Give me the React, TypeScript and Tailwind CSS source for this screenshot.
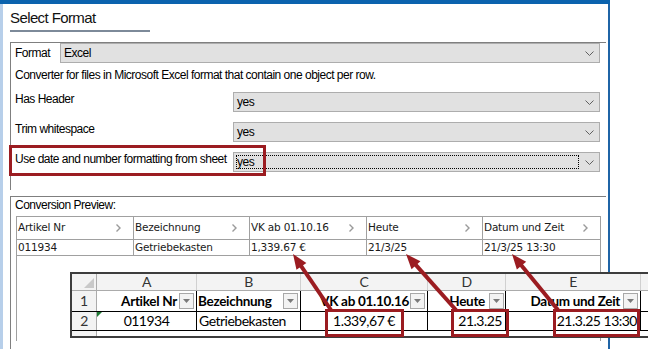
import React from 'react';

const RED = '#9b1c21';

function ChevronDown() {
  return (
    <svg width="9" height="5" viewBox="0 0 9 5">
      <path d="M0.5 0.5 L4.5 4.5 L8.5 0.5" fill="none" stroke="#606060" strokeWidth="1" />
    </svg>
  );
}

function ChevronRight() {
  return (
    <svg width="5" height="8" viewBox="0 0 5 8" className="shrink-0">
      <path d="M0.5 0.5 L4 4 L0.5 7.5" fill="none" stroke="#9a9a9a" strokeWidth="1.4" />
    </svg>
  );
}

function Combo({ value, focused }: { value: string; focused?: boolean }) {
  return (
    <div className="flex-1 h-[20px] bg-[#e1e1e1] border border-[#adadad] flex items-center pl-[2px]">
      <div
        className={`flex-1 h-[14px] flex items-center pl-[0px] leading-[14px] ${
          focused ? 'border border-dotted border-black' : 'border border-transparent'
        }`}
      >
        {value}
      </div>
      <div className="w-[20px] flex justify-center">
        <ChevronDown />
      </div>
    </div>
  );
}

function OptionRow({ label, value, focused }: { label: string; value: string; focused?: boolean }) {
  return (
    <div className="flex shrink-0 h-[20px] mt-[10px] mr-[6px]">
      <div className="w-[222px] pl-[4px] leading-[14px] whitespace-nowrap">{label}</div>
      <Combo value={value} focused={focused} />
    </div>
  );
}

const previewCols = [
  { name: 'Artikel Nr', value: '011934', w: 'w-[117px]' },
  { name: 'Bezeichnung', value: 'Getriebekasten', w: 'w-[116px]' },
  { name: 'VK ab 01.10.16', value: '1,339.67 €', w: 'w-[117px]' },
  { name: 'Heute', value: '21/3/25', w: 'w-[116px]' },
  { name: 'Datum und Zeit', value: '21/3/25 13:30', w: 'flex-1' },
];

function PreviewGrid() {
  return (
    <div className="ml-[5px] w-[585px] h-[125px] shrink-0 border border-b-0 border-[#a0a0a0] font-['DejaVu_Sans',sans-serif] text-[10.5px] tracking-[-0.2px] text-[#1a1a1a]">
      <div className="flex h-[23px] border-b border-[#a0a0a0]">
        {previewCols.map((c, i) => (
          <div
            key={c.name}
            className={`${c.w} shrink-0 flex items-center justify-between pl-[1px] pr-[12px] ${
              i < 4 ? 'border-r border-[#a0a0a0]' : ''
            }`}
          >
            <span>{c.name}</span>
            <ChevronRight />
          </div>
        ))}
      </div>
      <div className="flex h-[16px] border-b border-[#a0a0a0]">
        {previewCols.map((c, i) => (
          <div
            key={c.name}
            className={`${c.w} shrink-0 flex items-center pl-[1px] ${i < 4 ? 'border-r border-[#a0a0a0]' : ''}`}
          >
            {c.value}
          </div>
        ))}
      </div>
    </div>
  );
}

function FilterButton() {
  return (
    <div className="w-[15px] h-[16px] border border-[#a8a8a8] bg-[#f3f3f3] flex items-center justify-center shrink-0">
      <svg width="7" height="4" viewBox="0 0 7 4">
        <path d="M0 0 L7 0 L3.5 4 Z" fill="#7a7a7a" />
      </svg>
    </div>
  );
}

const xlCols = [
  { letter: 'A', w: 'w-[100px]' },
  { letter: 'B', w: 'w-[104px]' },
  { letter: 'C', w: 'w-[127px]' },
  { letter: 'D', w: 'w-[78px]' },
  { letter: 'E', w: 'w-[135px]' },
  { letter: '', w: 'w-[60px]' },
];

function ExcelSnippet() {
  return (
    <div className="absolute left-[70px] top-[272px] w-[640px] h-[66px] border-2 border-r-0 border-[#3d3d3d] bg-white font-['Lato',sans-serif] text-[14px] text-black flex flex-col">
      {/* column letters */}
      <div className="flex h-[17px] bg-[#f3f3f3] border-b border-[#ababab] text-[#333] leading-[16px]">
        <div className="w-[25px] shrink-0 border-r border-[#ababab] relative">
          <svg width="10" height="10" viewBox="0 0 10 10" className="absolute right-[2px] bottom-[2px]">
            <path d="M10 0 L10 10 L0 10 Z" fill="#c9c9c9" />
          </svg>
        </div>
        {xlCols.map((c, i) => (
          <div key={i} className={`${c.w} shrink-0 text-center border-r border-[#d0d0d0]`}>
            {c.letter}
          </div>
        ))}
      </div>
      {/* row 1 */}
      <div className="flex h-[21px] border-b border-black font-bold text-[13.5px] tracking-[-0.3px]">
        <div className="w-[25px] shrink-0 bg-[#f3f3f3] border-r border-[#ababab] text-center text-[#333] leading-[20px] font-normal text-[14px] tracking-normal">1</div>
        <div className="w-[100px] shrink-0 border-r border-black flex items-center justify-end gap-[2px] pr-[2px]">
          <span>Artikel Nr</span>
          <FilterButton />
        </div>
        <div className="w-[104px] shrink-0 border-r border-black flex items-center justify-between pl-[1px] pr-[2px]">
          <span>Bezeichnung</span>
          <FilterButton />
        </div>
        <div className="w-[127px] shrink-0 border-r border-black flex items-center justify-end gap-[1px] pr-[2px]">
          <span>VK ab 01.10.16</span>
          <FilterButton />
        </div>
        <div className="w-[78px] shrink-0 border-r border-black flex items-center justify-end gap-[4px] pr-[1px]">
          <span>Heute</span>
          <FilterButton />
        </div>
        <div className="w-[135px] shrink-0 border-r border-black flex items-center justify-end gap-[3px] pr-[2px]">
          <span>Datum und Zeit</span>
          <FilterButton />
        </div>
        <div className="w-[60px] shrink-0" />
      </div>
      {/* row 2 */}
      <div className="flex h-[19px] border-b border-black leading-[18px]">
        <div className="w-[25px] shrink-0 bg-[#f3f3f3] border-r border-[#ababab] text-center text-[#333]">2</div>
        <div className="w-[100px] shrink-0 border-r border-black text-center relative">
          <svg width="5" height="5" viewBox="0 0 5 5" className="absolute left-0 top-0">
            <path d="M0 0 L5 0 L0 5 Z" fill="#1e7b34" />
          </svg>
          011934
        </div>
        <div className="w-[104px] shrink-0 border-r border-black pl-[2px]">Getriebekasten</div>
        <div className="w-[127px] shrink-0 border-r border-black text-center">1.339,67 €</div>
        <div className="w-[78px] shrink-0 border-r border-black text-right pr-[3px]">21.3.25</div>
        <div className="w-[135px] shrink-0 border-r border-black text-right pr-[3px]">21.3.25 13:30</div>
        <div className="w-[60px] shrink-0" />
      </div>
      {/* row 3 (cut off) */}
      <div className="flex flex-1">
        <div className="w-[25px] shrink-0 bg-[#f3f3f3] border-r border-[#ababab]" />
      </div>
    </div>
  );
}

function Arrow({ x1, y1, x2, y2 }: { x1: number; y1: number; x2: number; y2: number }) {
  // tail (x1,y1) -> tip (x2,y2)
  const dx = x2 - x1;
  const dy = y2 - y1;
  const len = Math.sqrt(dx * dx + dy * dy);
  const ux = dx / len;
  const uy = dy / len;
  const head = 15;
  const half = 6;
  const bx = x2 - ux * head;
  const by = y2 - uy * head;
  const p1 = `${bx - uy * half},${by + ux * half}`;
  const p2 = `${bx + uy * half},${by - ux * half}`;
  return (
    <g>
      <line x1={x1} y1={y1} x2={bx + ux * 2} y2={by + uy * 2} stroke={RED} strokeWidth="4" />
      <polygon points={`${x2},${y2} ${p1} ${p2}`} fill={RED} />
    </g>
  );
}

export default function App() {
  return (
    <div className="relative w-[648px] h-[349px] overflow-hidden bg-white font-['Liberation_Sans',Arial,sans-serif] text-[12px] tracking-[-0.5px] text-black">
      <div className="flex">
        <div className="w-[610px] flex flex-col h-[349px] overflow-hidden">
          <div className="h-[4px] shrink-0 bg-[#0b63ae]" />
          <div className="flex flex-1 min-h-0">
            <div className="w-[3px] bg-[#b7cfea]" />
            <div className="w-[605px] flex flex-col pl-[7px] min-h-0">
              <div className="pt-[4px] h-[24px] shrink-0 text-[15px] tracking-[-0.6px] leading-[20px] text-[#111]">Select Format</div>
              <div className="mt-[2px] h-[2px] shrink-0 w-[140px] bg-[#7d8a99]" />

              {/* Format options group */}
              <div className="mt-[10px] shrink-0 w-[596px] border-t border-l border-[#7f7f7f] pb-[18px]">
                <div className="flex h-[20px] mr-[6px]">
                  <div className="w-[49px] pl-[4px] leading-[20px]">Format</div>
                  <div className="flex-1 h-[20px] bg-[#e1e1e1] border border-[#adadad] flex items-center pl-[3px]">
                    <div className="flex-1">Excel</div>
                    <div className="w-[20px] flex justify-center">
                      <ChevronDown />
                    </div>
                  </div>
                </div>
                <div className="h-[19px] pt-[4px] pl-[4px] leading-[16px]">
                  Converter for files in Microsoft Excel format that contain one object per row.
                </div>
                <OptionRow label="Has Header" value="yes" />
                <OptionRow label="Trim whitespace" value="yes" />
                <OptionRow label="Use date and number formatting from sheet" value="yes" focused />
              </div>

              {/* Preview group */}
              <div className="mt-[6px] w-[596px] flex-1 min-h-0 border-t border-l border-[#7f7f7f]">
                <div className="h-[19px] pl-[4px] leading-[16px]">Conversion Preview:</div>
                <PreviewGrid />
              </div>
            </div>
            <div className="w-[2px] bg-[#1f64a6]" />
          </div>
        </div>
        <div className="flex-1" />
      </div>

      {/* annotations */}
      <div className="absolute left-[9px] top-[145px] w-[257px] h-[31px] border-[3px] border-[#9b1c21]" />
      <ExcelSnippet />
      <div className="absolute left-[325px] top-[309px] w-[79px] h-[28px] border-[3px] border-[#9b1c21]" />
      <div className="absolute left-[451px] top-[309px] w-[58px] h-[28px] border-[3px] border-[#9b1c21]" />
      <div className="absolute left-[553px] top-[309px] w-[87px] h-[28px] border-[3px] border-[#9b1c21]" />
      <svg className="absolute left-0 top-0 pointer-events-none" width="648" height="349">
        <Arrow x1={331} x2={293} y1={310} y2={254} />
        <Arrow x1={456} x2={406} y1={310} y2={254} />
        <Arrow x1={558} x2={512} y1={310} y2={254} />
      </svg>
    </div>
  );
}
